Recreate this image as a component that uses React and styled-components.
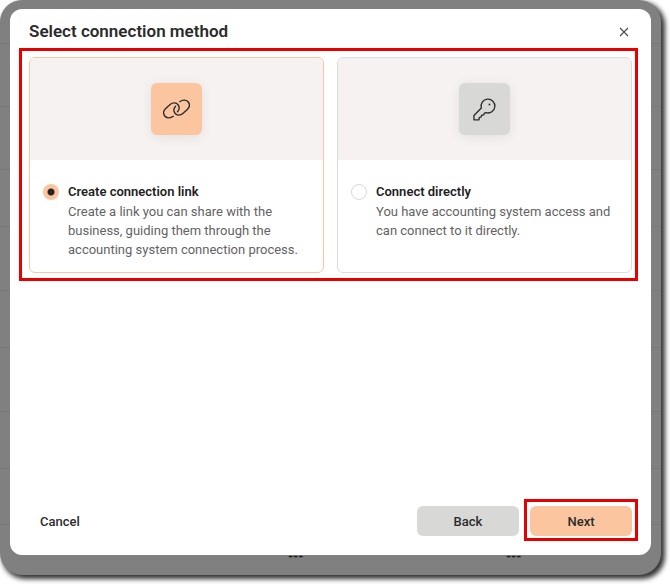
import React, { useState } from "react";
import styled, { createGlobalStyle } from "styled-components";

const GlobalStyle = createGlobalStyle`
  * {
    box-sizing: border-box;
  }
  body {
    margin: 0;
    background: #ffffff;
    color: #2b2b2b;
    font-family: Roboto, "Liberation Sans", sans-serif;
    font-size: 13px;
    line-height: 19px;
  }
  button {
    font: inherit;
    color: inherit;
    border: 0;
    padding: 0;
    background: none;
    cursor: pointer;
  }
`;

const Page = styled.div`
  display: flex;
  min-height: 100vh;
  padding: 0 9px 9px 0;
`;

const Backdrop = styled.div`
  position: relative;
  flex: 1;
  display: flex;
  padding: 9px 10px 20px;
  border-radius: 22px;
  background: #808080;
  box-shadow: 3px 3px 5px 1px rgba(0, 0, 0, 0.8);
`;

/* dimmed list behind the dialog */
const DimmedRows = styled.div`
  position: absolute;
  inset: 0;
  display: grid;
  grid-template-rows: 44px 63px 63px 57px 64px 57px 64px 57px 56px 1fr;
`;

const DimmedRow = styled.div`
  display: grid;
  grid-template-columns: 288px 218px 1fr;
  align-items: center;
  color: #1c1c1c;
  font-weight: 700;
  &:not(:last-child) {
    border-bottom: 1px solid #777777;
  }
  &:last-child {
    padding-top: 12px;
  }
`;

const Dialog = styled.section`
  position: relative;
  flex: 1;
  display: flex;
  flex-direction: column;
  padding: 12px 13px 14px 9px;
  border-radius: 12px;
  background: #ffffff;
`;

const Header = styled.header`
  display: flex;
  align-items: center;
  justify-content: space-between;
  padding: 0 9px 0 10px;
  margin-bottom: 6px;
`;

const Title = styled.h1`
  margin: 0;
  font-size: 17px;
  font-weight: 600;
  line-height: 21px;
`;

const CloseButton = styled.button`
  display: flex;
  color: #4a4a4a;
`;

const Highlight = styled.div`
  border: 3px solid #e60000;
  padding: ${({ $compact }) => ($compact ? "4px 3px 2px" : "6px 3px 5px 7px")};
`;

const Cards = styled.div`
  display: grid;
  grid-template-columns: 1fr 1fr;
  gap: 13px;
`;

const Card = styled.label`
  display: flex;
  flex-direction: column;
  border: 1px solid ${({ $selected }) => ($selected ? "#fac59f" : "#dcdcdc")};
  border-radius: 6px;
  cursor: pointer;
`;

const CardArt = styled.div`
  display: flex;
  align-items: center;
  justify-content: center;
  height: 102px;
  border-radius: 5px 5px 0 0;
  background: #f5f2f1;
`;

const IconTile = styled.div`
  display: flex;
  align-items: center;
  justify-content: center;
  width: 51px;
  height: 52px;
  border-radius: 6px;
  background: ${({ $selected }) => ($selected ? "#fac59f" : "#d8d8d6")};
  box-shadow: 0 2px 12px rgba(0, 0, 0, 0.08);
`;

const CardBody = styled.div`
  display: flex;
  gap: 9px;
  padding: 22px 13px 13px;
`;

const Radio = styled.input`
  appearance: none;
  flex: none;
  width: 16px;
  height: 16px;
  margin: 2px 0 0;
  border: 1px solid #d8d8d8;
  border-radius: 50%;
  background: #ffffff;
  &:checked {
    border: 0;
    background: radial-gradient(circle, #242424 3px, #fac59f 4px);
  }
`;

const CardTitle = styled.div`
  font-weight: 600;
  line-height: 20px;
  color: #1f1f1f;
`;

const CardText = styled.div`
  color: #636363;
`;

const Footer = styled.footer`
  display: flex;
  align-items: baseline;
  margin-top: auto;
  gap: 5px;
`;

const CancelButton = styled.button`
  margin-right: auto;
  padding: 0 21px;
  font-weight: 500;
`;

const ActionButton = styled.button`
  display: block;
  width: 102px;
  height: 30px;
  border-radius: 6px;
  background: ${({ $primary }) => ($primary ? "#fac59f" : "#d8d8d6")};
  font-weight: 500;
`;

const LinkIcon = () => (
  <svg width="27" height="20" viewBox="0 0 28 20" fill="none" stroke="#2b2b2b" strokeWidth="1.4" strokeLinecap="round">
    <path d="M10.6 17.6 C7.6 20 3.4 19.6 1.6 17 C0 14.6 .6 11.6 2.8 9.6 L7.4 5.4 C10 3 13.8 3.2 15.6 5.6 C17.2 7.8 17 10.6 15 12.8" />
    <path d="M17.4 2.4 C20.4 0 24.6 .4 26.4 3 C28 5.4 27.4 8.4 25.2 10.4 L20.6 14.6 C18 17 14.2 16.8 12.4 14.4 C10.8 12.2 11 9.4 13 7.2" />
  </svg>
);

const KeyIcon = () => (
  <svg width="23" height="23" viewBox="0 0 24 24" fill="none" stroke="#2b2b2b" strokeWidth="1.4" strokeLinejoin="round">
    <path d="M8.7 10.4 A7.2 7.2 0 1 1 13.6 15.3 L11.9 15.8 L11.2 17.6 L9 18 L8.4 20 L6.6 20.2 L6.2 22.8 H1 V18.2 Z" />
    <circle cx="17.2" cy="6.8" r="1" fill="#2b2b2b" stroke="none" />
  </svg>
);

const CloseIcon = () => (
  <svg width="10" height="10" viewBox="0 0 10 10" stroke="currentColor" strokeWidth="1.1">
    <path d="M1 1 L9 9 M9 1 L1 9" />
  </svg>
);

const methods = [
  {
    id: "link",
    title: "Create connection link",
    text: "Create a link you can share with the business, guiding them through the accounting system connection process.",
    Icon: LinkIcon,
  },
  {
    id: "direct",
    title: "Connect directly",
    text: "You have accounting system access and can connect to it directly.",
    Icon: KeyIcon,
  },
];

const App = () => {
  const [selected, setSelected] = useState("link");

  return (
    <>
      <GlobalStyle />
      <Page>
        <Backdrop>
          <DimmedRows>
            {Array.from({ length: 9 }, (_, i) => (
              <DimmedRow key={i} />
            ))}
            <DimmedRow>
              <span />
              <span>---</span>
              <span>---</span>
            </DimmedRow>
          </DimmedRows>
          <Dialog>
            <Header>
              <Title>Select connection method</Title>
              <CloseButton aria-label="Close">
                <CloseIcon />
              </CloseButton>
            </Header>
            <Highlight>
              <Cards>
                {methods.map(({ id, title, text, Icon }) => (
                  <Card key={id} $selected={selected === id}>
                    <CardArt>
                      <IconTile $selected={selected === id}>
                        <Icon />
                      </IconTile>
                    </CardArt>
                    <CardBody>
                      <Radio
                        type="radio"
                        name="method"
                        checked={selected === id}
                        onChange={() => setSelected(id)}
                      />
                      <div>
                        <CardTitle>{title}</CardTitle>
                        <CardText>{text}</CardText>
                      </div>
                    </CardBody>
                  </Card>
                ))}
              </Cards>
            </Highlight>
            <Footer>
              <CancelButton>Cancel</CancelButton>
              <ActionButton>Back</ActionButton>
              <Highlight $compact>
                <ActionButton $primary>Next</ActionButton>
              </Highlight>
            </Footer>
          </Dialog>
        </Backdrop>
      </Page>
    </>
  );
};

export default App;
